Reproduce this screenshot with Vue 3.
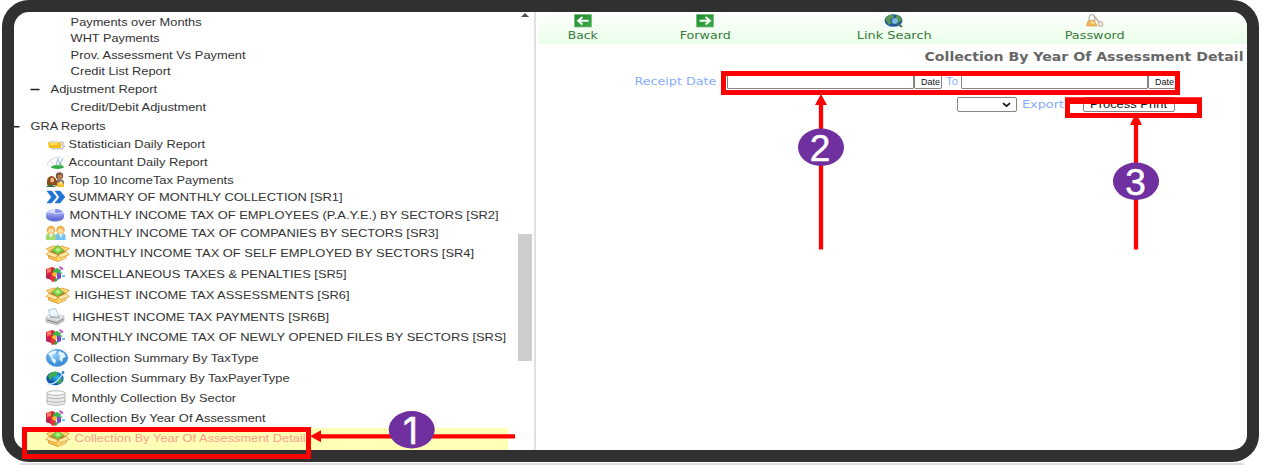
<script setup>
const rows = [
  { t: 'Payments over Months', x: 71, w: 131, b: 26.3 },
  { t: 'WHT Payments', x: 71, w: 89, b: 42.3 },
  { t: 'Prov. Assessment Vs Payment', x: 71, w: 175, b: 59 },
  { t: 'Credit List Report', x: 71, w: 100, b: 75.3 },
  { t: 'Adjustment Report', x: 51, w: 106.5, b: 93, icon: 'minus', ix: 30 },
  { t: 'Credit/Debit Adjustment', x: 71, w: 135.5, b: 110.7 },
  { t: 'GRA Reports', x: 30.5, w: 75, b: 129.7, icon: 'dash', ix: 14 },
  { t: 'Statistician Daily Report', x: 69, w: 136.5, b: 148, icon: 'stat' },
  { t: 'Accountant Daily Report', x: 69, w: 139, b: 165.7, icon: 'acct' },
  { t: 'Top 10 IncomeTax Payments', x: 69, w: 165, b: 183.7, icon: 'people' },
  { t: 'SUMMARY OF MONTHLY COLLECTION [SR1]', x: 69, w: 274, b: 201.3, icon: 'chev' },
  { t: 'MONTHLY INCOME TAX OF EMPLOYEES (P.A.Y.E.) BY SECTORS [SR2]', x: 70, w: 429, b: 219.2, icon: 'pie' },
  { t: 'MONTHLY INCOME TAX OF COMPANIES BY SECTORS [SR3]', x: 71, w: 368, b: 237.5, icon: 'users' },
  { t: 'MONTHLY INCOME TAX OF SELF EMPLOYED BY SECTORS [SR4]', x: 75, w: 399.5, b: 257.3, icon: 'box' },
  { t: 'MISCELLANEOUS TAXES & PENALTIES [SR5]', x: 71, w: 276, b: 278.3, icon: 'cube' },
  { t: 'HIGHEST INCOME TAX ASSESSMENTS [SR6]', x: 75, w: 275, b: 299, icon: 'box' },
  { t: 'HIGHEST INCOME TAX PAYMENTS [SR6B]', x: 73, w: 256.5, b: 320.7, icon: 'printer' },
  { t: 'MONTHLY INCOME TAX OF NEWLY OPENED FILES BY SECTORS [SRS]', x: 71, w: 435.5, b: 341, icon: 'cube' },
  { t: 'Collection Summary By TaxType', x: 74, w: 185, b: 362, icon: 'globe' },
  { t: 'Collection Summary By TaxPayerType', x: 71, w: 219, b: 382.5, icon: 'earth' },
  { t: 'Monthly Collection By Sector', x: 72, w: 164.5, b: 402.2, icon: 'db' },
  { t: 'Collection By Year Of Assessment', x: 71, w: 195, b: 422, icon: 'cube' },
  { t: 'Collection By Year Of Assessment Detail', x: 75, w: 231, b: 442.3, icon: 'box', on: true },
]
let prev = 8
for (const r of rows) {
  r.h = r.b - prev + (r.on ? 4 : 0)
  prev = r.b
  r.start = r.icon ? (r.ix ?? 45) : r.x
}
const tools = [
  { t: 'Back', w: 30, icon: 'back' },
  { t: 'Forward', w: 51, icon: 'fwd' },
  { t: 'Link Search', w: 75, icon: 'link' },
  { t: 'Password', w: 60, icon: 'pass' },
]
</script>

<template>
  <div class="page">
    <svg class="defs" width="0" height="0">
      <defs>
        <linearGradient id="gBlue" x1="0" y1="0" x2="0" y2="1"><stop offset="0" stop-color="#c9d0ff" /><stop offset="1" stop-color="#5865d2" /></linearGradient>
        <radialGradient id="gSea" cx=".4" cy=".35"><stop offset="0" stop-color="#8fd0ff" /><stop offset="1" stop-color="#3d8fdc" /></radialGradient>
        <radialGradient id="gDeep" cx=".6" cy=".4"><stop offset="0" stop-color="#34b7ee" /><stop offset="1" stop-color="#0b4fae" /></radialGradient>
        <linearGradient id="gGreen" x1="0" y1="0" x2="1" y2="1"><stop offset="0" stop-color="#1b8a2d" /><stop offset="1" stop-color="#3fae46" /></linearGradient>
        <symbol id="minus" viewBox="0 0 24 20"><path d="M.5 10.500h9" stroke="#222" stroke-width="1.500" /></symbol>
        <symbol id="dash" viewBox="0 0 24 20"><path d="M0 10.800h5.500" stroke="#222" stroke-width="1.500" /></symbol>
        <symbol id="stat" viewBox="0 0 24 20">
          <path d="M3 8l4-2 11 1 2 8H6z" fill="#e9e9ec" /><path d="M3 8.500h13v5.500H4z" fill="#f6bd17" /><path d="M5 9h7v2H5z" fill="#ffe15b" />
          <path d="M16 8l3 1-2 2 3 1-3 2" stroke="#b9bac0" fill="none" /><path d="M6 15h12" stroke="#b9bbc2" />
        </symbol>
        <symbol id="acct" viewBox="0 0 24 20">
          <path d="M3 14c-2-4 5-9 13-9M5 9l4 4" stroke="#d4d8de" fill="none" /><ellipse cx="12.500" cy="15" rx="6.500" ry="1.900" fill="#35ac4a" />
          <path d="M11 13l2-6 2 5 3-6" stroke="#9fbcdf" stroke-width="1.100" fill="none" /><path d="M12 14l3-3 3 3" fill="#74c67d" />
        </symbol>
        <symbol id="people" viewBox="0 0 24 20">
          <circle cx="14.500" cy="6" r="3.700" fill="#7a583c" /><path d="M10 16V11q5-4 9 0v5z" fill="#827467" /><circle cx="15" cy="7" r="2.400" fill="#bd8051" />
          <path d="M2 15q-1-8 4-9 6 0 6 9z" fill="#8d4d1e" /><ellipse cx="7.200" cy="10" rx="1.900" ry="2.600" fill="#efbe87" /><path d="M1 17q4-5 10 0z" fill="#34733c" />
          <path d="M12 17v-4l3-1 4 2v3z" fill="#f3bd30" /><circle cx="16" cy="13" r="1.700" fill="#ffe47c" />
        </symbol>
        <symbol id="chev" viewBox="0 0 24 20">
          <path d="M2 4h4.500l5 6-5 6H2l4.500-6zM10 4h5l5 6-5 6h-5l4.500-6z" fill="#2175d8" stroke="#1762bd" stroke-width=".5" />
        </symbol>
        <symbol id="pie" viewBox="0 0 24 20">
          <path d="M1 9v3c1 6 17 6 18 0V9z" fill="#6a73cf" /><ellipse cx="10" cy="9.500" rx="9" ry="5.500" fill="url(#gBlue)" />
          <path d="M9.500 8.500V4L2 7z" fill="#dce1ff" /><path d="M10 4v4.500l8-1Q15 3.500 10 4" fill="#8794eb" /><path d="M9.700 4v4.700l9-1" stroke="#eef" stroke-width=".7" fill="none" />
        </symbol>
        <symbol id="users" viewBox="0 0 24 20">
          <path d="M1 17v-4q0-3 5-3t5 3v4z" fill="#a3dc6b" /><path d="M10.500 17v-4q0-3 5-3t5 3v4z" fill="#72c0ee" />
          <path d="M4 11l2 4 2-4M14 11l2 4 2-4" fill="#e9f8ff" /><circle cx="6" cy="7" r="4.300" fill="#f0ae50" /><circle cx="15.500" cy="7" r="4.300" fill="#f0ae50" />
          <circle cx="6" cy="8" r="2.800" fill="#ffdc9c" /><circle cx="15.500" cy="8" r="2.800" fill="#ffdc9c" />
        </symbol>
        <symbol id="box" viewBox="0 0 26 20">
          <path d="M3.500 9v6l9.500 3.500 8-3.500V9z" fill="#fbc553" stroke="#cf841b" stroke-width=".7" /><path d="M13 12v6l7.500-3V9z" fill="#ffdb78" />
          <path d="M4 9l9-5 8 5-8 4z" fill="#b87b22" /><path d="M4 8L1.500 5.500 9 3l4 1zM21 8l3.500-2.500L17 3l-4 1z" fill="#ffd671" stroke="#d98e24" stroke-width=".7" />
          <path d="M7 7.500l5.500-5.500 6 5.500-6 4z" fill="#76cf48" stroke="#53b040" stroke-width=".5" /><path d="M10 7l3-3 3 3-3 2z" fill="#b1ed7b" />
          <path d="M4 8.500l9 3.500-2.500 2.800-9.500-3.300zM21 8.500L13 12l2.500 2.800 9-3.300z" fill="#ffe9a8" stroke="#d98e24" stroke-width=".7" />
        </symbol>
        <symbol id="cube" viewBox="0 0 24 20">
          <path d="M1 5l6-2 3 1v11l-4 1-5-2z" fill="#d8283a" /><path d="M2 5l4-1v4l-4 1z" fill="#ff7967" /><path d="M1 11h4v4l-4-1z" fill="#b2225c" />
          <path d="M8 6l4-2 4 2-1 3-7 1z" fill="#39b54a" /><path d="M7 9l4-1 1 4-4 2z" fill="#f5bd2b" />
          <path d="M12 9l4-1v6l-4 2z" fill="#7847d5" /><path d="M5 14l3-2 3 1v4l-4 1z" fill="#e03340" /><path d="M9 15l4-1-1 3-2 1z" fill="#3ba844" />
          <path d="M14.500 2.800l3.500 2.700" stroke="#c14ace" stroke-width="2" /><path d="M14.500 8.500l2.500 1" stroke="#50c172" stroke-width="1.800" /><path d="M17 12h3" stroke="#43aee0" stroke-width="1.700" />
        </symbol>
        <symbol id="printer" viewBox="0 0 24 20">
          <path d="M1 10l5-3 13 2v5l-7 4-11-3z" fill="#cfd1d4" stroke="#a0a3a8" stroke-width=".6" />
          <path d="M1 10l5-2 13 1-7 4z" fill="#f1f1f2" /><path d="M5.500 9.500L3 3l7.500-1.500L14 9.500z" fill="#eaf5fc" stroke="#9cb9cf" stroke-width=".7" /><path d="M2 13l10 3 6-4" stroke="#777a7f" fill="none" /><path d="M5 10l7 1.200 3-1.200" stroke="#888" stroke-width=".8" fill="none" />
        </symbol>
        <symbol id="globe" viewBox="0 0 24 20">
          <ellipse cx="12" cy="10" rx="10.700" ry="8.500" fill="url(#gSea)" stroke="#4c91cf" stroke-width=".6" />
          <path d="M3 6q5-5 9-3l-2 3-3 1 1 3 3 2-1 4-3-3-1-4zM14 3l5 2 2 4-3 1-1 4-3-3 1-3-2-2z" fill="#e1f4fd" />
        </symbol>
        <symbol id="earth" viewBox="0 0 24 20">
          <ellipse cx="10" cy="10.500" rx="8.700" ry="6.700" fill="url(#gDeep)" /><path d="M3 8q4-6 10-4l-2 4-4 1-2 4zM13 12l5-2-2 5-4 1z" fill="#3eae4c" />
          <path d="M2 16q6 1 10-3t7-9" stroke="#bce9ff" stroke-width="1.200" fill="none" /><circle cx="18" cy="4.500" r="1.400" fill="#377fd0" />
        </symbol>
        <symbol id="db" viewBox="0 0 24 20">
          <path d="M2 5v10c0 3 18 3 18 0V5z" fill="#ececec" stroke="#aaa" stroke-width=".8" /><ellipse cx="11" cy="5" rx="9" ry="2.300" fill="#f8f8f8" stroke="#aaa" stroke-width=".8" />
          <path d="M2 8.500c0 3 18 3 18 0M2 12c0 3 18 3 18 0" stroke="#b0b0b0" fill="none" />
        </symbol>
        <symbol id="back" viewBox="0 0 20 14"><path d="M1.500 .5h17v12.500h-17z" fill="url(#gGreen)" stroke="#72b977" stroke-width=".7" /><path d="M15.500 6.800H5M9.500 3L5 6.800l4.500 3.700" stroke="#fff" stroke-width="1.900" fill="none" /></symbol>
        <symbol id="fwd" viewBox="0 0 20 14"><path d="M1.500 .5h17v12.500h-17z" fill="url(#gGreen)" stroke="#72b977" stroke-width=".7" /><path d="M4.500 6.800H15M10.500 3l4.500 3.800-4.500 3.700" stroke="#fff" stroke-width="1.900" fill="none" /></symbol>
        <symbol id="link" viewBox="0 0 20 14">
          <ellipse cx="9.500" cy="6.500" rx="9" ry="6.300" fill="#235c9e" /><path d="M1 5q3-5 8-4.500L10 3 6 6l2 3-3 2zM12 1l5 2 1 4-4 1-2-3z" fill="#579753" /><circle cx="11" cy="7" r="3" fill="#79b8df" />
          <path d="M13 9l5 4" stroke="#477353" stroke-width="2" />
        </symbol>
        <symbol id="pass" viewBox="0 0 20 14">
          <path d="M4 7q0-7 3-6.500 3 1 3 6" stroke="#b5b5bd" stroke-width="1.200" fill="none" /><path d="M3 7l6-1 3 6H1.500z" fill="#f4b455" stroke="#d78d3b" stroke-width=".6" /><path d="M4 8l4-1 2 4" fill="#ffe3a0" />
          <circle cx="15.500" cy="10" r="2.500" fill="#efe0d2" stroke="#b69f91" stroke-width=".8" /><path d="M14 8L9 2" stroke="#b7a9a0" stroke-width="1.200" />
        </symbol>
      </defs>
    </svg>

    <div class="frame">
      <aside class="tree">
        <ul>
          <li v-for="r in rows" :key="r.t" :class="{ on: r.on }" :style="{ height: r.h + 'px', paddingLeft: r.start - 14 + 'px' }">
            <span v-if="r.icon" class="ico" :style="{ width: r.x - r.start + 'px' }">
              <svg :width="r.icon === 'box' ? 26 : 24" :height="20"><use :href="'#' + r.icon" /></svg>
            </span>
            <svg class="label" :width="r.w" height="15"><text x="-.4" y="11.400" :textLength="r.w" lengthAdjust="spacingAndGlyphs">{{ r.t }}</text></svg>
          </li>
        </ul>
        <div class="scroll"><i class="up"></i><i class="thumb"></i></div>
      </aside>
      <main>
        <nav>
          <div v-for="k in tools" :key="k.t" class="tool">
            <svg width="20" height="14"><use :href="'#' + k.icon" /></svg>
            <svg class="vlabel" :width="k.w" height="14"><text x="-.3" y="10.500" :textLength="k.w" lengthAdjust="spacingAndGlyphs">{{ k.t }}</text></svg>
          </div>
        </nav>
        <svg class="title" width="319" height="16"><text x="-.5" y="12.300" textLength="319" lengthAdjust="spacingAndGlyphs">Collection By Year Of Assessment Detail</text></svg>
        <div class="dates">
          <svg class="hint" width="82" height="14"><text x="-.6" y="11.200" textLength="82" lengthAdjust="spacingAndGlyphs">Receipt Date</text></svg>
          <span class="field first"></span>
          <span class="btn"><svg width="19" height="11"><text x="0" y="8.500" textLength="19" lengthAdjust="spacingAndGlyphs">Date</text></svg></span>
          <svg class="hint to" width="12" height="14"><text x="0" y="11" textLength="12" lengthAdjust="spacingAndGlyphs">To</text></svg>
          <span class="field"></span>
          <span class="btn"><svg width="19" height="11"><text x="0" y="8.500" textLength="19" lengthAdjust="spacingAndGlyphs">Date</text></svg></span>
        </div>
        <div class="export">
          <span class="select"><svg width="9" height="6"><path d="M1 1.200l3.500 3 3.500-3" stroke="#111" stroke-width="1.700" fill="none" /></svg></span>
          <svg class="hint" width="42" height="14"><text x="0" y="11.200" textLength="42" lengthAdjust="spacingAndGlyphs">Export</text></svg>
          <span class="print"><svg width="77" height="14"><text x="0" y="10.300" textLength="77" lengthAdjust="spacingAndGlyphs">Process Print</text></svg></span>
        </div>
      </main>
    </div>
    <div class="shade"></div>

    <svg class="marks" width="1262" height="465">
      <g fill="none" stroke="#f00" stroke-width="5">
        <rect x="24.500" y="429.500" width="284" height="27" />
        <rect x="723.500" y="73.500" width="454" height="19" />
        <rect x="1067.500" y="100" width="132" height="15.500" />
        <path d="M1065 100.700h137" stroke-width="6.500" />
        <path d="M515 436.300H320M821 249.500V104M1136 249.500V124" stroke-width="4.300" />
      </g>
      <path d="M310 436.300l11-6v12zM821 94l6 11h-12zM1136 113l6 12h-12z" fill="#f00" />
      <g fill="#7030a0">
        <ellipse cx="411.700" cy="429.700" rx="23" ry="18.700" /><ellipse cx="821" cy="147.300" rx="23" ry="18.700" /><ellipse cx="1136" cy="181.200" rx="23" ry="18.700" />
      </g>
      <g class="nums">
        <text class="one" x="410.500" y="444">1</text><text x="820" y="161">2</text><text x="1135.500" y="194.800">3</text>
      </g>
    </svg>
  </div>
</template>

<style>
body { margin: 0; background: #fff; overflow: hidden; }
</style>
<style scoped>
.page { position: relative; width: 1262px; height: 465px; overflow: hidden; background: #fff; }
.defs { position: absolute; }
.frame { box-sizing: border-box; width: 1257px; height: 462px; margin-left: 2px; border: 12px solid #303030; border-radius: 27px; display: flex; overflow: hidden; }
.shade { height: 2px; margin: 1px 18px 0 20px; background: #dedede; }
.tree { flex: none; width: 520px; display: flex; border-right: 2px solid #e1e1e1; }
ul { list-style: none; margin: 0; padding: 0; width: 503px; height: 438px; overflow: hidden; display: flex; flex-direction: column; }
li { box-sizing: border-box; flex: none; display: flex; align-items: flex-end; }
li svg { display: block; flex: none; overflow: visible; }
.ico { flex: none; height: 18px; margin-bottom: -2px; display: flex; align-items: flex-end; }
.label text { font: 11px "Liberation Sans", sans-serif; fill: #333; }
.on { padding-bottom: 4px; background: linear-gradient(#ffffb5, #ffffb5) 10px 100% / 484px 22px no-repeat; }
.on .label text { fill: #ff9c8c; }
.scroll { width: 15px; height: 438px; display: flex; flex-direction: column; align-items: center; }
.up { margin-top: 1px; border: 4px solid transparent; border-top: 0; border-bottom: 4px solid #505050; }
.thumb { width: 14px; height: 127px; margin: 217px 0 0 1px; background: #cdcdcd; }
main { flex: 1; padding-left: 2px; display: flex; flex-direction: column; min-width: 0; }
nav { height: 32px; display: grid; grid-template-columns: 90px 154px 224px 178px; background: linear-gradient(#fff, #e9ffe9); }
.tool { display: flex; flex-direction: column; align-items: center; padding-top: 2px; }
.tool svg { display: block; overflow: visible; }
.vlabel text { font: 11px "DejaVu Sans", sans-serif; fill: #3a7a3a; }
.title { align-self: flex-end; margin: 5px 3px 0 0; overflow: visible; }
.title text { font: bold 11.500px "DejaVu Sans", sans-serif; fill: #666; }
.dates { display: flex; margin: 9px 0 0 96.500px; height: 15px; }
.hint { overflow: visible; flex: none; }
.hint text { font: 10.500px "DejaVu Sans", sans-serif; fill: #85adff; }
.field { box-sizing: border-box; flex: none; width: 187px; height: 15px; border: 1px solid #858585; border-radius: 1px; }
.first { margin-left: 10px; }
.btn { box-sizing: border-box; flex: none; width: 28px; height: 15px; border: 1px solid #858585; border-radius: 2px; display: flex; justify-content: flex-end; align-items: flex-end; padding: 0 1px 1px 0; }
.btn svg { overflow: visible; }
.btn text { font: 8.500px "Liberation Sans", sans-serif; fill: #111; }
.to { margin: 0 3px 0 4px; }
.hint.to text { font: 10.500px "Liberation Sans", sans-serif; }
.export { display: flex; margin: 8px 0 0 419px; height: 16px; }
.select { box-sizing: border-box; flex: none; width: 60px; height: 15px; border: 1px solid #858585; border-radius: 2px; display: flex; align-items: center; justify-content: flex-end; padding-right: 5px; margin-right: 5px; }
.export .hint { margin-right: 18.500px; }
.print { box-sizing: border-box; flex: none; width: 92.500px; height: 15px; border: 1px solid #858585; border-radius: 2px; display: flex; justify-content: center; }
.print text { font: 11px "Liberation Sans", sans-serif; fill: #111; }
.marks { position: absolute; left: 0; top: 0; }
.nums text { font: 37px "Liberation Sans", sans-serif; fill: #fff; stroke: #fff; stroke-width: .5px; text-anchor: middle; }
.nums .one { font-family: Inter, Roboto, sans-serif; }
</style>
